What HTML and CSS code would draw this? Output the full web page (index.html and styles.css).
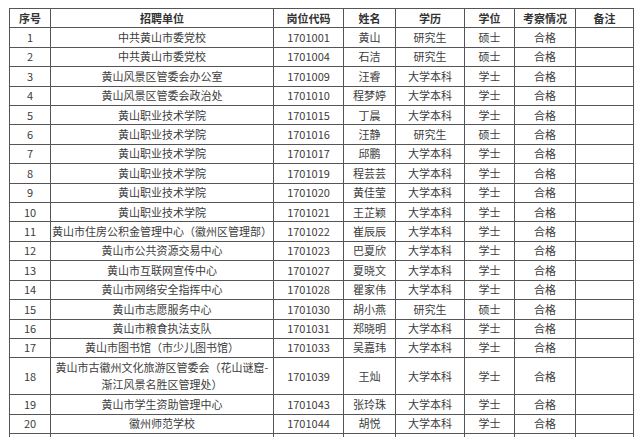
FILE: index.html
```html
<!DOCTYPE html>
<html lang="zh-CN">
<head>
<meta charset="utf-8">
<title>招聘考察情况</title>
<link rel="stylesheet" href="styles.css">
</head>
<body>
<table class="grid">
  <colgroup>
    <col class="c-no"><col class="c-unit"><col class="c-code"><col class="c-name"><col class="c-edu"><col class="c-deg"><col class="c-res"><col class="c-note">
  </colgroup>
  <thead>
    <tr><th>序号</th><th>招聘单位</th><th>岗位代码</th><th>姓名</th><th>学历</th><th>学位</th><th>考察情况</th><th>备注</th></tr>
  </thead>
  <tbody>
    <tr><td>1</td><td>中共黄山市委党校</td><td>1701001</td><td>黄山</td><td>研究生</td><td>硕士</td><td>合格</td><td></td></tr>
    <tr><td>2</td><td>中共黄山市委党校</td><td>1701004</td><td>石洁</td><td>研究生</td><td>硕士</td><td>合格</td><td></td></tr>
    <tr><td>3</td><td>黄山风景区管委会办公室</td><td>1701009</td><td>汪睿</td><td>大学本科</td><td>学士</td><td>合格</td><td></td></tr>
    <tr><td>4</td><td>黄山风景区管委会政治处</td><td>1701010</td><td>程梦婷</td><td>大学本科</td><td>学士</td><td>合格</td><td></td></tr>
    <tr><td>5</td><td>黄山职业技术学院</td><td>1701015</td><td>丁晨</td><td>大学本科</td><td>学士</td><td>合格</td><td></td></tr>
    <tr><td>6</td><td>黄山职业技术学院</td><td>1701016</td><td>汪静</td><td>研究生</td><td>硕士</td><td>合格</td><td></td></tr>
    <tr><td>7</td><td>黄山职业技术学院</td><td>1701017</td><td>邱鹏</td><td>大学本科</td><td>学士</td><td>合格</td><td></td></tr>
    <tr><td>8</td><td>黄山职业技术学院</td><td>1701019</td><td>程芸芸</td><td>大学本科</td><td>学士</td><td>合格</td><td></td></tr>
    <tr><td>9</td><td>黄山职业技术学院</td><td>1701020</td><td>黄佳莹</td><td>大学本科</td><td>学士</td><td>合格</td><td></td></tr>
    <tr><td>10</td><td>黄山职业技术学院</td><td>1701021</td><td>王芷颖</td><td>大学本科</td><td>学士</td><td>合格</td><td></td></tr>
    <tr><td>11</td><td>黄山市住房公积金管理中心（徽州区管理部）</td><td>1701022</td><td>崔辰辰</td><td>大学本科</td><td>学士</td><td>合格</td><td></td></tr>
    <tr><td>12</td><td>黄山市公共资源交易中心</td><td>1701023</td><td>巴夏欣</td><td>大学本科</td><td>学士</td><td>合格</td><td></td></tr>
    <tr><td>13</td><td>黄山市互联网宣传中心</td><td>1701027</td><td>夏晓文</td><td>大学本科</td><td>学士</td><td>合格</td><td></td></tr>
    <tr><td>14</td><td>黄山市网络安全指挥中心</td><td>1701028</td><td>瞿家伟</td><td>大学本科</td><td>学士</td><td>合格</td><td></td></tr>
    <tr><td>15</td><td>黄山市志愿服务中心</td><td>1701030</td><td>胡小燕</td><td>研究生</td><td>硕士</td><td>合格</td><td></td></tr>
    <tr><td>16</td><td>黄山市粮食执法支队</td><td>1701031</td><td>郑晓明</td><td>大学本科</td><td>学士</td><td>合格</td><td></td></tr>
    <tr><td>17</td><td>黄山市图书馆（市少儿图书馆）</td><td>1701033</td><td>吴嘉玮</td><td>大学本科</td><td>学士</td><td>合格</td><td></td></tr>
    <tr><td>18</td><td>黄山市古徽州文化旅游区管委会（花山谜窟-<br>渐江风景名胜区管理处）</td><td>1701039</td><td>王灿</td><td>大学本科</td><td>学士</td><td>合格</td><td></td></tr>
    <tr><td>19</td><td>黄山市学生资助管理中心</td><td>1701043</td><td>张玲珠</td><td>大学本科</td><td>学士</td><td>合格</td><td></td></tr>
    <tr><td>20</td><td>徽州师范学校</td><td>1701044</td><td>胡悦</td><td>大学本科</td><td>学士</td><td>合格</td><td></td></tr>
    <tr class="cut"><td></td><td></td><td></td><td></td><td></td><td></td><td></td><td></td></tr>
  </tbody>
</table>
</body>
</html>
```
FILE: styles.css
```css
html, body {
  overflow: hidden;
}
body {
  margin: 8px 0 0 9px;
  background: #ffffff;
  font-family: "Noto Sans CJK SC", "Liberation Sans", sans-serif;
  font-size: 11px;
  color: #3c3c3c;
}
.grid {
  border-collapse: collapse;
  table-layout: fixed;
  width: 624px;
}
.c-no { width: 41px; }
.c-unit { width: 223px; }
.c-code { width: 70px; }
.c-name { width: 52px; }
.c-edu { width: 69px; }
.c-deg { width: 50px; }
.c-res { width: 61px; }
.c-note { width: 58px; }
.grid th,
.grid td {
  border: 1px solid #555555;
  text-align: center;
  vertical-align: middle;
  padding: 0.5px 0;
  line-height: 17.4px;
  white-space: nowrap;
  overflow: hidden;
}
.grid th {
  font-weight: bold;
  color: #333333;
}
.grid .cut td {
  height: 18px;
}
```
